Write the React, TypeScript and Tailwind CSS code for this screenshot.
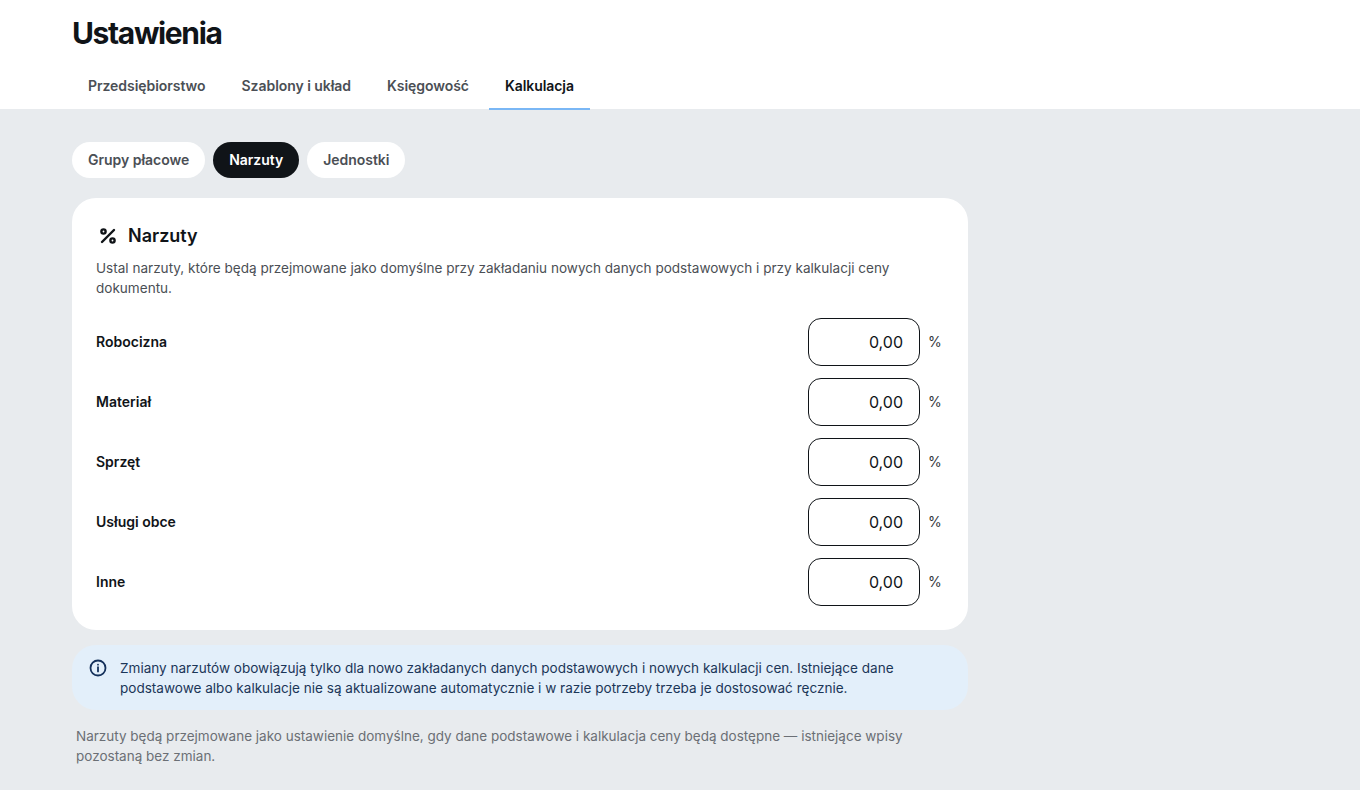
import React from "react";

const tabs = ["Przedsiębiorstwo", "Szablony i układ", "Księgowość", "Kalkulacja"];
const rows = ["Robocizna", "Materiał", "Sprzęt", "Usługi obce", "Inne"];

export default function App() {
  return (
    <div className="h-[790px] overflow-hidden bg-[#e8ebee] font-['Inter',sans-serif] text-[#101418]">
      <header className="h-[110px] border-b border-[#e8ebee] bg-white px-[72px]">
        <h1 className="pt-[15px] text-[30px] leading-[36px] font-bold tracking-[-1.35px] text-[#101418]">Ustawienia</h1>
        <nav className="mt-[17px] flex gap-1">
          {tabs.map((t, i) => (
            <div
              key={t}
              className={
                i === 3
                  ? "flex h-[42px] items-center border-b-2 border-[#7ab7f5] px-4 pb-1 text-sm font-semibold tracking-[-0.08px] text-[#101418]"
                  : "flex h-[42px] items-center border-b-2 border-transparent px-4 pb-1 text-sm font-semibold tracking-[-0.05px] text-[#4b4f55]"
              }
            >
              {t}
            </div>
          ))}
        </nav>
      </header>
      <main className="ml-[72px] w-[896px] pt-8">
        <div className="flex gap-2">
          <div className="flex h-9 items-center rounded-full bg-white px-4 text-sm font-semibold tracking-[-0.03px] text-[#4b4f55]">Grupy płacowe</div>
          <div className="flex h-9 items-center rounded-full bg-[#101418] px-4 text-sm font-semibold tracking-[-0.03px] text-white">Narzuty</div>
          <div className="flex h-9 items-center rounded-full bg-white px-4 text-sm font-semibold tracking-[-0.03px] text-[#4b4f55]">Jednostki</div>
        </div>
        <section className="mt-5 rounded-3xl bg-white p-6">
          <div className="flex items-center gap-2">
            <svg width="24" height="24" viewBox="0 0 24 24" fill="none" stroke="#101418" strokeWidth="2.4" strokeLinecap="round">
              <line x1="18" y1="6" x2="6" y2="18" />
              <circle cx="7.5" cy="7.5" r="2.1" />
              <circle cx="16.5" cy="16.5" r="2.1" />
            </svg>
            <h2 className="text-lg leading-[28px] font-semibold text-[#101418]">Narzuty</h2>
          </div>
          <p className="mt-2 text-[13.55px] leading-5 text-[#4b4f55]">
            Ustal narzuty, które będą przejmowane jako domyślne przy zakładaniu nowych danych podstawowych i przy kalkulacji ceny dokumentu.
          </p>
          <div className="mt-5 flex flex-col gap-3">
            {rows.map((r) => (
              <div key={r} className="flex items-center justify-between">
                <span className="text-sm font-semibold text-[#101418]">{r}</span>
                <div className="flex items-center gap-2">
                  <div className="flex h-12 w-28 items-center justify-end rounded-[13px] border border-[#101418] bg-white px-4 text-base text-[#101418]">0,00</div>
                  <span className="w-4 text-sm text-[#33373c]">%</span>
                </div>
              </div>
            ))}
          </div>
        </section>
        <div className="mt-[15px] flex h-[65px] gap-[13px] rounded-3xl bg-[#e3effa] py-[13px] pr-4 pl-[17px]">
          <svg className="mt-[1px] shrink-0" width="18" height="18" viewBox="0 0 24 24" fill="none" stroke="#14305a" strokeWidth="2.4" strokeLinecap="round">
            <circle cx="12" cy="12" r="10" />
            <line x1="12" y1="11" x2="12" y2="16.5" />
            <line x1="12" y1="7.5" x2="12" y2="7.6" />
          </svg>
          <p className="text-[13.55px] leading-5 text-[#1b3658]">
            Zmiany narzutów obowiązują tylko dla nowo zakładanych danych podstawowych i nowych kalkulacji cen. Istniejące dane podstawowe albo kalkulacje nie są aktualizowane automatycznie i w razie potrzeby trzeba je dostosować ręcznie.
          </p>
        </div>
        <p className="mt-4 px-1 text-[13.5px] leading-5 text-[#6b6f75]">
          Narzuty będą przejmowane jako ustawienie domyślne, gdy dane podstawowe i kalkulacja ceny będą dostępne — istniejące wpisy pozostaną bez zmian.
        </p>
      </main>
    </div>
  );
}
